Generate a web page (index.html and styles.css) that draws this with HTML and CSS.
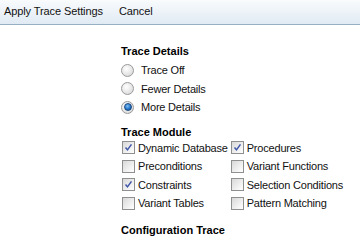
FILE: index.html
```html
<!DOCTYPE html>
<html lang="en">
<head>
    <meta charset="UTF-8">
    <title>Trace Settings</title>
    <link rel="stylesheet" href="styles.css">
</head>
<body>
    <div class="toolbar">
        <span class="tool">Apply Trace Settings</span>
        <span class="tool">Cancel</span>
    </div>
    <div class="panel">
        <h3>Trace Details</h3>
        <div class="radios">
            <label class="opt"><span class="radio"></span>Trace Off</label>
            <label class="opt"><span class="radio"></span>Fewer Details</label>
            <label class="opt"><span class="radio on"></span>More Details</label>
        </div>
        <h3>Trace Module</h3>
        <div class="checks">
            <label class="opt"><span class="check on"><svg viewBox="0 0 13 13"><path d="M3 6.5 L5.3 9.3 L10 2.8" /></svg></span>Dynamic Database</label>
            <label class="opt"><span class="check on"><svg viewBox="0 0 13 13"><path d="M3 6.5 L5.3 9.3 L10 2.8" /></svg></span>Procedures</label>
            <label class="opt"><span class="check"></span>Preconditions</label>
            <label class="opt"><span class="check"></span>Variant Functions</label>
            <label class="opt"><span class="check on"><svg viewBox="0 0 13 13"><path d="M3 6.5 L5.3 9.3 L10 2.8" /></svg></span>Constraints</label>
            <label class="opt"><span class="check"></span>Selection Conditions</label>
            <label class="opt"><span class="check"></span>Variant Tables</label>
            <label class="opt"><span class="check"></span>Pattern Matching</label>
        </div>
        <h3>Configuration Trace</h3>
    </div>
</body>
</html>
```

FILE: styles.css
```css
body {
    margin: 0;
    font-family: "Liberation Sans", Arial, sans-serif;
    font-size: 11px;
    color: #111;
    background-color: #fff;
}
.toolbar {
    display: flex;
    align-items: center;
    gap: 16px;
    height: 22px;
    padding: 0 0 2px 4px;
    background: linear-gradient(#f9fbfd, #e0eaf3);
    border-bottom: 1px solid #98aec3;
}
.tool {
    color: #111;
    line-height: 14px;
    letter-spacing: -0.1px;
}
.panel {
    padding: 19px 0 0 121px;
}
h3 {
    margin: 0;
    font-size: 11px;
    line-height: 14px;
    font-weight: bold;
    color: #000;
}
.radios {
    display: flex;
    flex-direction: column;
    margin: 3px 0 8px;
}
.checks {
    display: grid;
    grid-template-columns: auto auto;
    justify-content: start;
    column-gap: 3px;
    margin: 0 0 10px 1px;
}
.opt {
    display: flex;
    align-items: center;
    height: 18.5px;
    line-height: 14px;
    letter-spacing: -0.2px;
}
.radio {
    width: 11px;
    height: 11px;
    border: 1px solid #9a9a9a;
    border-radius: 50%;
    background: radial-gradient(circle at 40% 35%, #fff, #e4e4e4 60%, #cfcfcf);
    margin-right: 7px;
    display: flex;
    align-items: center;
    justify-content: center;
}
.radio.on::after {
    content: "";
    width: 6px;
    height: 6px;
    border-radius: 50%;
    border: 1px solid #1c4b80;
    background: radial-gradient(circle at 40% 35%, #7fc0f5, #1f6fc4 60%, #134a8c);
}
.check {
    width: 11px;
    height: 11px;
    border: 1px solid #8e8f8f;
    background: linear-gradient(135deg, #d8d8d8, #f4f4f4 70%, #fff);
    margin-right: 3px;
    box-sizing: content-box;
    display: flex;
}
.check svg {
    width: 11px;
    height: 11px;
}
.check path {
    fill: none;
    stroke: #3f56a8;
    stroke-width: 1.8;
}
```
